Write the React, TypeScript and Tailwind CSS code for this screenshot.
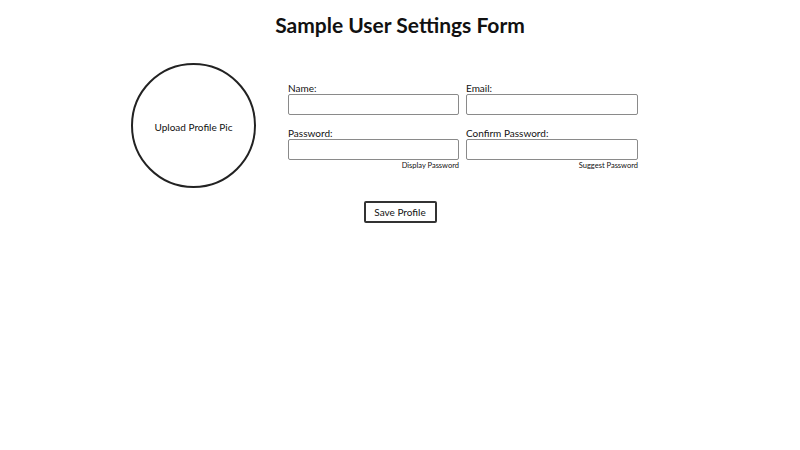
export default function App() {
  return (
    <main
      className="min-h-screen w-full bg-white text-[#111]"
      style={{ fontFamily: "Lato, 'Noto Sans', sans-serif" }}
    >
      <h1 className="pt-[10px] text-center text-[21px] font-bold leading-[30px]">
        Sample User Settings Form
      </h1>

      <div className="mt-[23px] flex items-center justify-center pr-[31px]">
        <button className="flex h-[125px] w-[125px] shrink-0 items-center justify-center rounded-full border-2 border-[#222] pt-[3px] text-[10px]">
          Upload Profile Pic
        </button>

        <div className="ml-[32px] grid w-[350px] grid-cols-[171px_172px] gap-x-[7px] gap-y-[12px] pt-[2px]">
          <div className="flex flex-col">
            <label className="text-[10px] leading-[12px]">Name:</label>
            <input className="h-[21px] rounded-[2px] border border-[#8a8a8a]" />
          </div>
          <div className="flex flex-col">
            <label className="text-[10px] leading-[12px]">Email:</label>
            <input className="h-[21px] rounded-[2px] border border-[#8a8a8a]" />
          </div>
          <div className="flex flex-col">
            <label className="text-[10px] leading-[12px]">Password:</label>
            <input type="password" className="h-[21px] rounded-[2px] border border-[#8a8a8a]" />
            <span className="pt-[1px] text-right text-[7.5px] leading-[10px]">Display Password</span>
          </div>
          <div className="flex flex-col">
            <label className="text-[10px] leading-[12px]">Confirm Password:</label>
            <input type="password" className="h-[21px] rounded-[2px] border border-[#8a8a8a]" />
            <span className="pt-[1px] text-right text-[7.5px] leading-[10px]">Suggest Password</span>
          </div>
        </div>
      </div>

      <div className="mt-[13px] flex justify-center">
        <button className="h-[22px] w-[73px] rounded-[2px] border-2 border-[#333] text-[10px]">
          Save Profile
        </button>
      </div>
    </main>
  );
}
